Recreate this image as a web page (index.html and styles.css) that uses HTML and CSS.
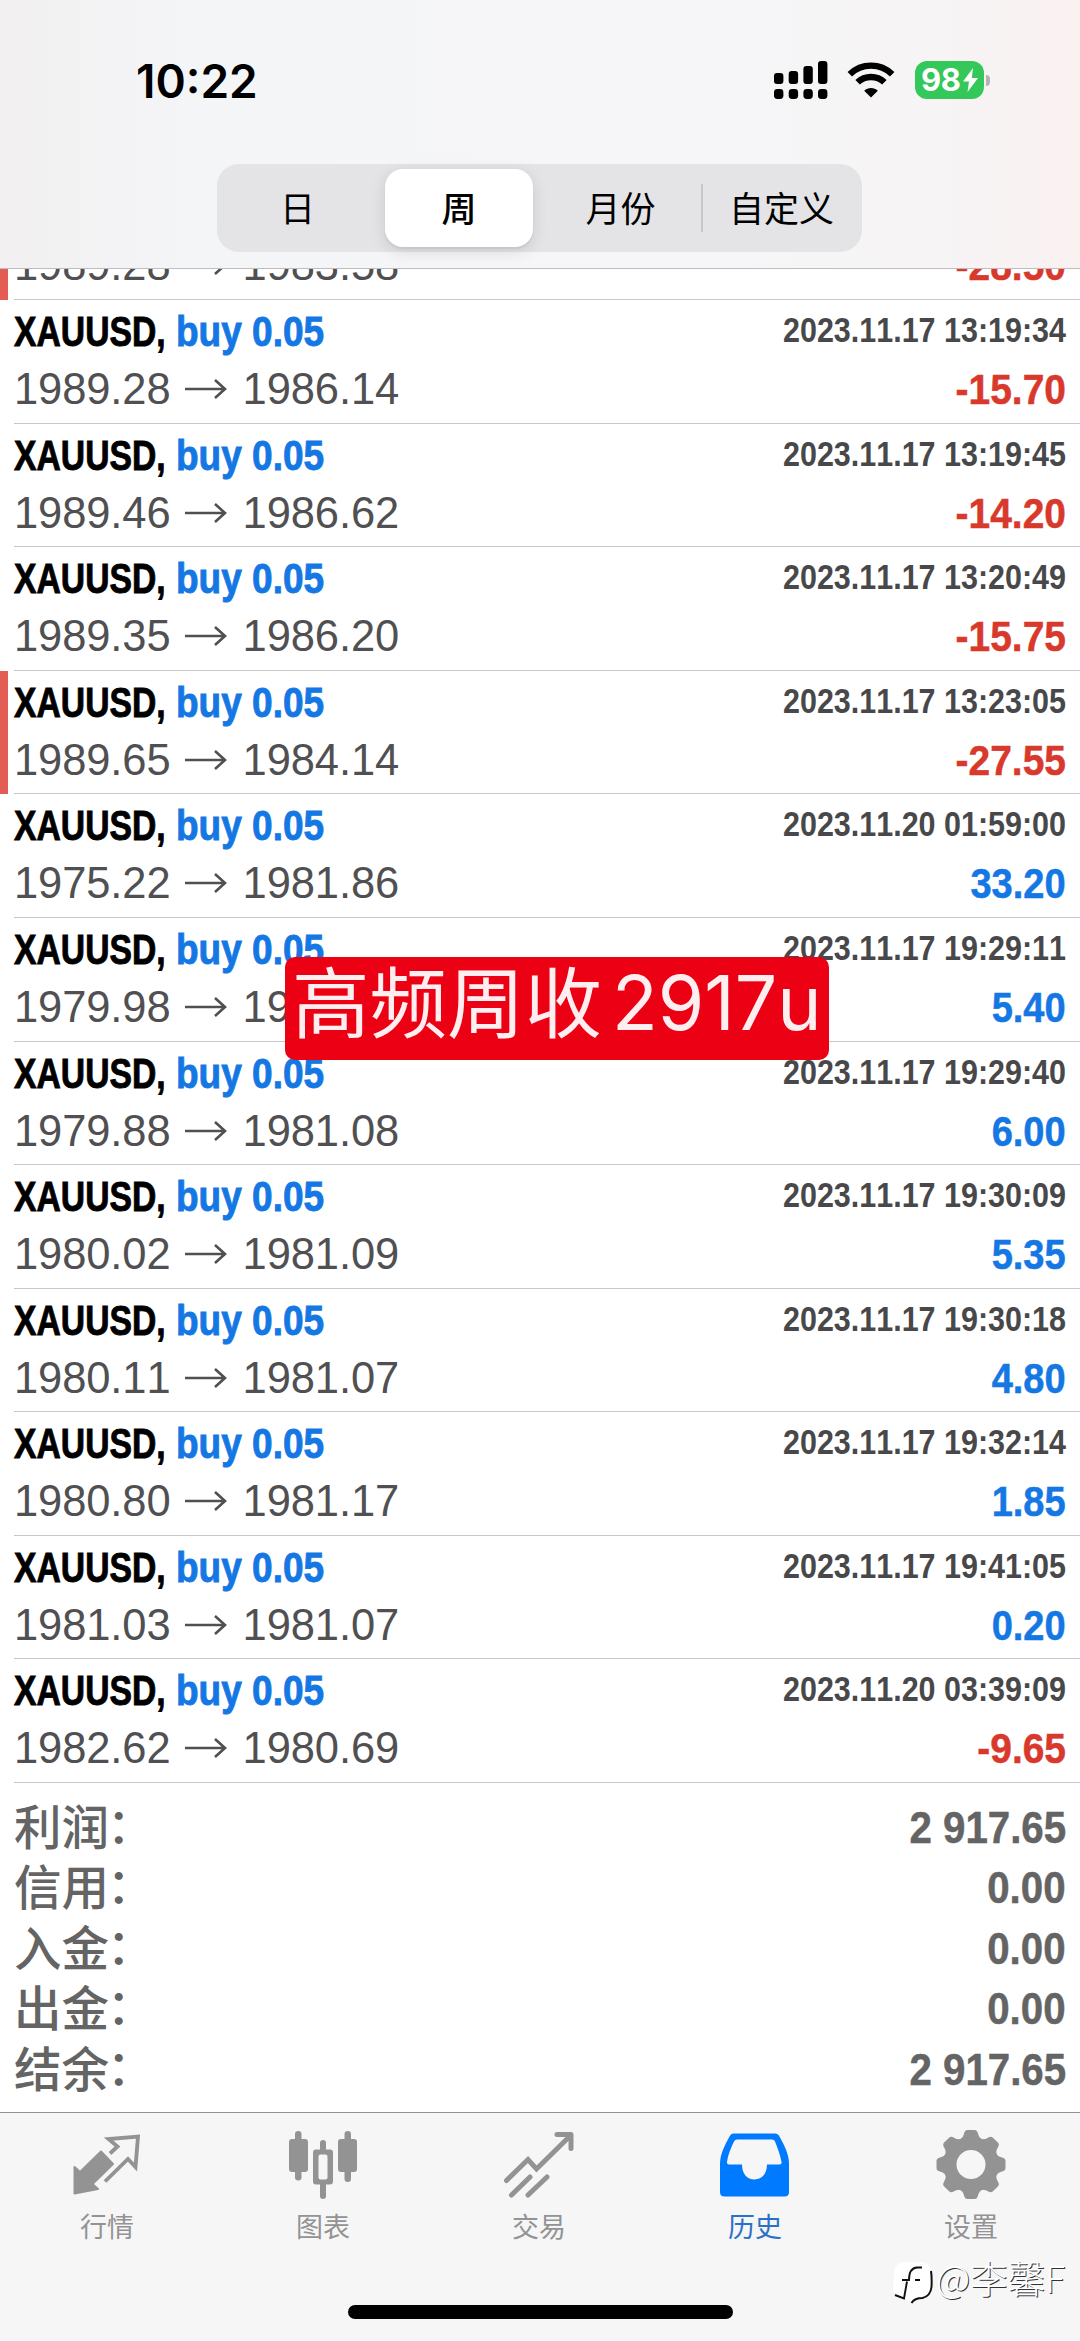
FILE: index.html
```html
<!DOCTYPE html>
<html lang="zh-CN">
<head>
<meta charset="utf-8">
<title>历史</title>
<link rel="stylesheet" href="styles.css">
</head>
<body>
<div class="screen">
  <header class="top">
    <div class="status">
      <span class="clock">10:22</span>
      <div class="status-icons">
        <svg class="signal" width="54" height="40" viewBox="0 0 54 40">
          <rect x="0" y="13" width="9.4" height="11" rx="3"/><rect x="14.7" y="11" width="9.4" height="13" rx="3"/><rect x="29.4" y="6" width="9.4" height="18" rx="3"/><rect x="44" y="1" width="9.4" height="23" rx="3"/>
          <rect x="0" y="29" width="9.4" height="10" rx="3.4"/><rect x="14.7" y="29" width="9.4" height="10" rx="3.4"/><rect x="29.4" y="29" width="9.4" height="10" rx="3.4"/><rect x="44" y="29" width="9.4" height="10" rx="3.4"/>
        </svg>
        <svg class="wifi" width="48" height="36" viewBox="0 0 48 36">
          <path d="M2.8 12.2a30.5 30.5 0 0 1 42.4 0M10.6 20.3a19.4 19.4 0 0 1 26.8 0" fill="none" stroke="#000" stroke-width="6.4"/>
          <path d="M24 35.500l-6.800-6.700c3.600-3.800 10-3.800 13.600 0z"/>
        </svg>
        <div class="battery"><span>98</span><svg width="17" height="26" viewBox="0 0 17 26"><path d="M11 1L1 14.500h6L5.500 25 16 11H9.800z" fill="#fff"/></svg></div>
        <i class="nub"></i>
      </div>
    </div>
    <nav class="segments">
      <span class="seg">日</span><span class="seg on">周</span><span class="seg">月份</span><span class="seg last">自定义</span>
    </nav>
  </header>
  <main class="list" id="list"></main>
  <section class="totals">
    <div class="total"><span class="label">利润<i>：</i></span><b class="sum">2 917.65</b></div>
    <div class="total"><span class="label">信用<i>：</i></span><b class="sum">0.00</b></div>
    <div class="total"><span class="label">入金<i>：</i></span><b class="sum">0.00</b></div>
    <div class="total"><span class="label">出金<i>：</i></span><b class="sum">0.00</b></div>
    <div class="total"><span class="label">结余<i>：</i></span><b class="sum">2 917.65</b></div>
  </section>
  <footer class="tabs">
    <div class="tab">
      <svg width="72" height="72" viewBox="-1 0 72 72"><path d="M29 18.500l12 12.500-20.500 20 5.500 5-23.500 4.500V34l5.500 5z" fill="currentColor" stroke="currentColor" stroke-width="2" stroke-linejoin="round"/><path d="M38 20.500l7.500-7L36.500 6 66 3.500 63.500 34 56 26 33 48.500" fill="none" stroke="currentColor" stroke-width="3.800"/></svg>
      <span>行情</span>
    </div>
    <div class="tab">
      <svg width="72" height="72" viewBox="-1 0 72 72"><g fill="currentColor"><rect x="1" y="6" width="19" height="33" rx="3"/><rect x="7" y="-2" width="6.500" height="49.500" rx="3.200"/><rect x="50" y="6" width="19" height="33" rx="3"/><rect x="56.500" y="-2" width="6.500" height="51" rx="3.200"/><rect x="32" y="7" width="6" height="14" rx="3"/><rect x="32" y="48" width="6" height="18" rx="3"/><path fill-rule="evenodd" d="M28 16.500h14q3 0 3 3v29q0 3-3 3H28q-3 0-3-3v-29q0-3 3-3zm4.500 5q-2 0-2 2v21q0 2 2 2h5q2 0 2-2v-21q0-2-2-2z"/></g></svg>
      <span>图表</span>
    </div>
    <div class="tab">
      <svg width="72" height="72" viewBox="0 0 72 72"><path d="M3.500 47.500L25 26.500l8.500 9.500L66 4" fill="none" stroke="currentColor" stroke-width="5" stroke-linecap="round"/><path d="M54 1.500h14v14M8.500 62L27 44M25 62l19-18" fill="none" stroke="currentColor" stroke-width="5" stroke-linecap="round" stroke-linejoin="round"/></svg>
      <span>交易</span>
    </div>
    <div class="tab active">
      <svg width="72" height="72" viewBox="0 0 72 72"><path fill="currentColor" fill-rule="evenodd" d="M14 0.500H56q3 0 4.500 3c5 9 9.500 18 9.500 27V59q0 4.500-4.500 4.500h-60Q1 63.500 1 59V30.500c0-9 4.500-18 9.500-27Q12 .500 14 .500zM18 6.500q-2 0-3 2C12 15 9 21 8 29q-.3 2.500 2 2.500h13c0 9 5 15 12.500 15S48 40.500 48 31.500h12.500q2.500 0 2-2.500C61 21 58.500 15 56 8.500q-.7-2-3-2z"/></svg>
      <span>历史</span>
    </div>
    <div class="tab">
      <svg width="72" height="72" viewBox="-36 -36 72 72"><g transform="translate(0 -4.500)" id="gear"></g></svg>
      <span>设置</span>
    </div>
    <i class="home"></i>
  </footer>
  <div class="banner"><span>高频周收</span><b>2917u</b></div>
  <div class="mark">
    <svg width="44" height="46" viewBox="0 0 44 46"><path d="M14 2h14q11 0 11 11v15q0 7-6 9.500L19 41 5 36.500Q1 34 1 28l1-14Q2 2 14 2z" fill="#fff"/><path d="M39 11q1 7 .500 16-1 9-9 11-8 0-11 5" fill="none" stroke="#111" stroke-width="2"/><path d="M3 35l9 3.500 3-17M10 20h7q0-12 8-12.500h5M23 20h5" fill="none" stroke="#111" stroke-width="1.900"/></svg>
    <span>@李馨F</span>
  </div>
</div>
<script src="app.js"></script>
</body>
</html>
```
FILE: styles.css
```css
* { box-sizing: border-box; }
body { margin: 0; background: #fff; font-family: "Liberation Sans", "Noto Sans CJK SC", sans-serif; }
i { font-style: normal; }
.screen { position: relative; width: 1080px; height: 2341px; overflow: hidden; display: flex; flex-direction: column; background: #fff; }

.top { height: 269px; flex: none; border-bottom: 1px solid #bdbdc0; background: linear-gradient(90deg, #f2f0f1 0, #f4f5f7 18%, #f6f6f8 60%, #f6f4f5 86%, #faf1f1 100%); }
.status { height: 164px; display: flex; justify-content: space-between; align-items: flex-start; padding: 60px 90px 0 136px; }
.clock { font: 600 46px/42px Inter, sans-serif; letter-spacing: 0; }
.status-icons { display: flex; align-items: center; height: 40px; }
.wifi { margin-left: 19px; }
.battery { margin-left: 20px; width: 69px; height: 38px; border-radius: 12px; background: #34c759; color: #fff; display: flex; align-items: center; padding-left: 6px; font: 700 31px/38px Inter, sans-serif; letter-spacing: -0.5px; }
.battery svg { margin-left: 2px; }
.nub { width: 4px; height: 11px; margin-left: 2px; border-radius: 0 4px 4px 0; background: #b5b3b5; }
.segments { width: 645px; height: 88px; margin-left: 217px; border-radius: 22px; background: #e4e4e7; display: flex; align-items: center; }
.seg { flex: 1; display: flex; align-items: center; justify-content: center; height: 78px; font: 400 35px/74px "Noto Sans CJK SC", sans-serif; padding-bottom: 3px; }
.seg.on { flex: none; width: 148px; margin: 0 7px 0 7px; border-radius: 18px; background: #fff; font-weight: 500; box-shadow: 0 4px 16px rgba(0,0,0,.12), 0 2px 2px rgba(0,0,0,.06); }
.seg.last { background: linear-gradient(#c9c9cc, #c9c9cc) left center / 2px 48px no-repeat; }

.list { height: 1514px; flex: none; display: flex; flex-direction: column; justify-content: flex-end; overflow: hidden; }
.row { height: 123.58px; flex: none; padding: 6px 15px 0 14px; display: flex; flex-direction: column; background: linear-gradient(#c8c7cc, #c8c7cc) 14px 100% / 100% 1px no-repeat; }
.row.flag { box-shadow: inset 8px 0 #e35d54; }
.line { display: flex; justify-content: space-between; height: 58px; line-height: 50px; white-space: nowrap; font-kerning: none; }
.pair { font-size: 43px; font-weight: 700; display: flex; }
.sym { width: 161.5px; }
.sym span, .buy span, .date span, .profit span, .sum span { display: inline-block; transform-origin: 0 50%; }
.sym span, .buy span { -webkit-text-stroke: 0.9px currentColor; }
.buy { color: #1477e4; }
.date { font-size: 35px; font-weight: 700; color: #48484a; margin-right: -1px; line-height: 48px; }
.prices { font-size: 43.5px; height: 50px; color: #505052; display: flex; align-items: center; letter-spacing: -0.1px; }
.prices svg { margin: 0 16px 0 13px; }
.profit { font-size: 43px; font-weight: 700; color: #d8392c; -webkit-text-stroke: 0.5px currentColor; margin-right: -1px; }
.profit.up { color: #1477e4; }

.totals { height: 329px; flex: none; padding: 14px 15px 0 14px; color: #646464; }
.total { display: flex; justify-content: space-between; height: 60.4px; line-height: 61px; }
.label { font: 500 47.500px/56px "Noto Sans CJK SC", sans-serif; display: flex; }
.label i { margin-left: -14px; font-family: "Noto Sans CJK TC", sans-serif; line-height: 58px; }
.sum { font-size: 45px; font-kerning: none; -webkit-text-stroke: 0.5px currentColor; margin-right: -1px; }

.tabs { flex: 1; position: relative; display: grid; grid-template-columns: repeat(5, 1fr); background: #f6f6f7; border-top: 1px solid #929294; color: #939393; }
.tab { display: flex; flex-direction: column; align-items: center; padding: 20px 2px 0 0; font: 400 27px/36px "Noto Sans CJK SC", sans-serif; }
.tab svg { overflow: visible; }
.tab span { margin-top: 3px; }
.tab.active { color: #007aff; }
.tab.active span { color: #2a72c8; }
.home { position: absolute; left: 348px; top: 192px; width: 385px; height: 14px; border-radius: 7px; background: #000; }

.banner { position: absolute; left: 285px; top: 957px; width: 544px; height: 103px; border-radius: 10px; background: #eb0014; color: #ffeef0; display: flex; align-items: flex-start; padding-left: 7px; white-space: nowrap; font: 400 77.500px/82px "Noto Sans CJK SC", sans-serif; }
.banner b { font: 400 75px/92px Inter, sans-serif; margin-left: 10px; }
.mark { position: absolute; left: 892px; top: 2260px; display: flex; white-space: nowrap; color: #fff; font: 300 37.500px/34px "Noto Sans CJK SC", sans-serif; text-shadow: 1px 1px 0 #333; }
```
FILE: app.js
```js
const trades = [
  ["1989.28", "1983.58", "2023.11.17 13:19:30", "-28.50", 1],
  ["1989.28", "1986.14", "2023.11.17 13:19:34", "-15.70"],
  ["1989.46", "1986.62", "2023.11.17 13:19:45", "-14.20"],
  ["1989.35", "1986.20", "2023.11.17 13:20:49", "-15.75"],
  ["1989.65", "1984.14", "2023.11.17 13:23:05", "-27.55", 1],
  ["1975.22", "1981.86", "2023.11.20 01:59:00", "33.20"],
  ["1979.98", "1981.06", "2023.11.17 19:29:11", "5.40"],
  ["1979.88", "1981.08", "2023.11.17 19:29:40", "6.00"],
  ["1980.02", "1981.09", "2023.11.17 19:30:09", "5.35"],
  ["1980.11", "1981.07", "2023.11.17 19:30:18", "4.80"],
  ["1980.80", "1981.17", "2023.11.17 19:32:14", "1.85"],
  ["1981.03", "1981.07", "2023.11.17 19:41:05", "0.20"],
  ["1982.62", "1980.69", "2023.11.20 03:39:09", "-9.65"]
];
const arrow = '<svg width="43" height="22" viewBox="0 0 43 22"><path d="M1 11h40M31 2l10 9-10 9" fill="none" stroke="currentColor" stroke-width="2.600"/></svg>';
document.getElementById("list").innerHTML = trades.map(([open, close, date, profit, flag]) => `
<article class="row${flag ? " flag" : ""}">
  <div class="line"><div class="pair"><span class="sym" data-w="152">XAUUSD,</span><span class="buy" data-w="148">buy 0.05</span></div><span class="date" data-w="283">${date}</span></div>
  <div class="line"><div class="prices">${open}${arrow}${close}</div><span class="profit${profit[0] === "-" ? "" : " up"}" data-k="${profit[0] === "-" ? .905 : .885}">${profit}</span></div>
</article>`).join("");

// Condensed lettering: squeeze each bold text to its column measure.
document.querySelectorAll(".sum").forEach(el => { el.dataset.k = ".895"; });
document.querySelectorAll("[data-w],[data-k]").forEach(el => {
  el.innerHTML = "<span>" + el.textContent + "</span>";
  const s = el.firstChild, w = s.offsetWidth;
  const k = el.dataset.k ? +el.dataset.k : el.dataset.w / w;
  s.style.transform = `scaleX(${k})`;
  if (!el.classList.contains("sym") && !el.classList.contains("buy")) s.style.transformOrigin = "100% 50%";
});

let teeth = "";
for (let i = 0; i < 8; i++) teeth += `<path transform="rotate(${i * 45})" d="M-11.500-25q3.500-1.500 4.500-6 .8-3.500 3.500-3.500h7q2.700 0 3.500 3.500 1 4.500 4.500 6l-4 8h-15z"/>`;
document.getElementById("gear").innerHTML = `<g fill="currentColor">${teeth}</g><circle r="21" fill="none" stroke="currentColor" stroke-width="13"/>`;
```
